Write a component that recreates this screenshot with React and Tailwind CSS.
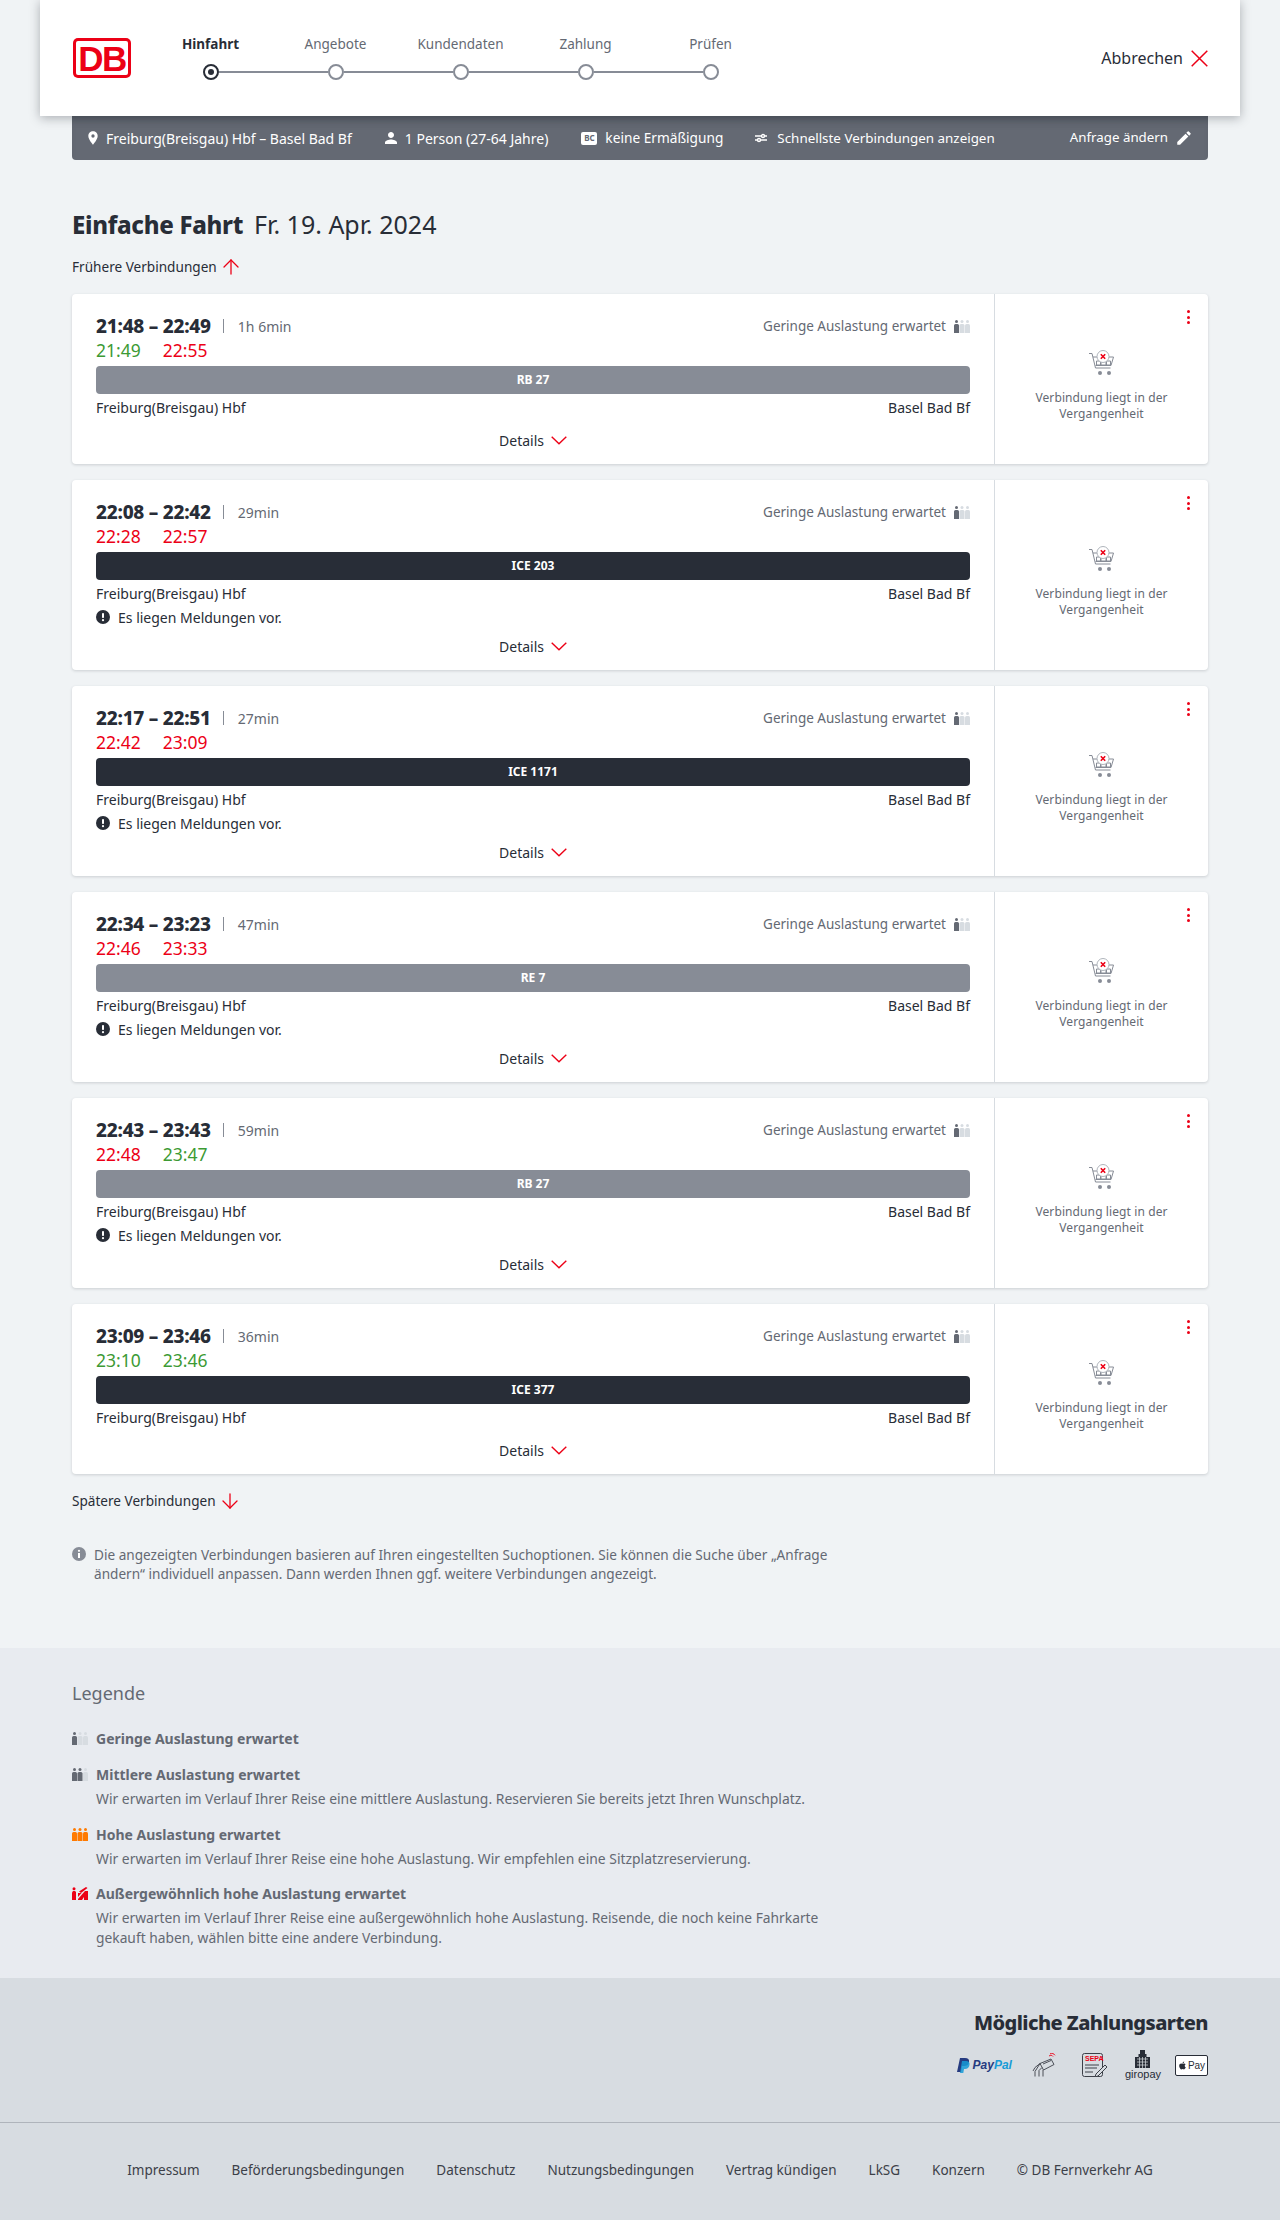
import React from "react";
import { ArrowDown, ArrowUp } from "lucide-react";
import { FaApple } from "react-icons/fa";
import { MdEdit, MdPlace, MdPerson } from "react-icons/md";

const connections = [
  { time: "21:48 – 22:49", dur: "1h 6min", dep: "21:49", depOk: true, arr: "22:55", arrOk: false, train: "RB 27", dark: false, notice: false },
  { time: "22:08 – 22:42", dur: "29min", dep: "22:28", depOk: false, arr: "22:57", arrOk: false, train: "ICE 203", dark: true, notice: true },
  { time: "22:17 – 22:51", dur: "27min", dep: "22:42", depOk: false, arr: "23:09", arrOk: false, train: "ICE 1171", dark: true, notice: true },
  { time: "22:34 – 23:23", dur: "47min", dep: "22:46", depOk: false, arr: "23:33", arrOk: false, train: "RE 7", dark: false, notice: true },
  { time: "22:43 – 23:43", dur: "59min", dep: "22:48", depOk: false, arr: "23:47", arrOk: true, train: "RB 27", dark: false, notice: true },
  { time: "23:09 – 23:46", dur: "36min", dep: "23:10", depOk: true, arr: "23:46", arrOk: true, train: "ICE 377", dark: true, notice: false },
];

const steps = ["Hinfahrt", "Angebote", "Kundendaten", "Zahlung", "Prüfen"];

const footerLinks = [
  "Impressum",
  "Beförderungsbedingungen",
  "Datenschutz",
  "Nutzungsbedingungen",
  "Vertrag kündigen",
  "LkSG",
  "Konzern",
  "© DB Fernverkehr AG",
];

const LoadIcon = ({ on = "#646973", off = "#d7dce1", count = 1, className = "" }) => (
  <svg width="16" height="13" viewBox="0 0 16 13" className={className}>
    {[0, 5.5, 11].map((x, i) => (
      <g key={x} fill={i < count ? on : off}>
        <circle cx={x + 2.5} cy="1.500" r="1.500" />
        <path d={`M${x} 5.500a1.500 1.500 0 0 1 1.500-1.500h2a1.500 1.500 0 0 1 1.500 1.500V13H${x}z`} />
      </g>
    ))}
  </svg>
);

const HighLoadIcon = () => (
  <svg width="16" height="13" viewBox="0 0 16 13">
    <g fill="#ec0016">
      <circle cx="2" cy="1.800" r="1.500" />
      <path d="M0 5.500L1 4h2l1 1v8H0z" />
      <path d="M6 6h3.500l-3.500 4zM6 13v-1l7-8h3v9h-4v-3l-2 3z" />
      <path d="M7 4.500L14 0l1.500 1L9 6z" />
    </g>
  </svg>
);

const CartIcon = () => (
  <svg width="27" height="27" viewBox="0 0 27 27" fill="none">
    <g stroke="#878c96" strokeWidth="1">
      <path d="M1 3.500h3l3.500 14.500h15" />
      <path d="M5 7h20.500l-2.500 8.500H7.500" />
      <path d="M8.500 11h4v4h-4zM13 10h5v5h-5zM18.500 11h4v4h-4z" />
    </g>
    <circle cx="15" cy="6.500" r="6" fill="#fff" stroke="#afb4bb" strokeWidth="1" />
    <path d="M12.800 4.300l4.400 4.400M17.200 4.300l-4.400 4.400" stroke="#ec0016" strokeWidth="1.600" />
    <circle cx="12" cy="23" r="2" fill="#878c96" />
    <circle cx="21" cy="23" r="2" fill="#878c96" />
  </svg>
);

const WideChevron = () => (
  <svg width="16" height="9" viewBox="0 0 16 9" fill="none">
    <path d="M0.700 0.700L8 7.700L15.300 0.700" stroke="#ec0016" strokeWidth="1.400" />
  </svg>
);

const NoticeIcon = () => (
  <svg width="14" height="14" viewBox="0 0 14 14">
    <circle cx="7" cy="7" r="7" fill="#282d37" />
    <rect x="6" y="3" width="2" height="5" rx="0.800" fill="#fff" />
    <circle cx="7" cy="10.200" r="1.100" fill="#fff" />
  </svg>
);

const Card = ({ c }) => (
  <div className="flex bg-white rounded-[4px] shadow-[0_1px_3px_rgba(40,45,55,0.18)]">
    <div className="flex-1 px-6 pb-1 pt-5">
      <div className="flex items-center justify-between h-6">
        <div className="flex items-center">
          <span className="text-[19px] font-extrabold tracking-[-0.25px] text-[#282d37]">{c.time}</span>
          <span className="ml-3 h-[14px] w-px bg-[#878c96]" />
          <span className="ml-[14px] text-[14px] text-[#646973]">{c.dur}</span>
        </div>
        <div className="flex items-center gap-2 text-[13.5px] text-[#646973]">
          Geringe Auslastung erwartet
          <LoadIcon />
        </div>
      </div>
      <div className="flex h-6 items-center gap-[22px] text-[17.5px]">
        <span className={c.depOk ? "text-[#3c9a34]" : "text-[#ec0016]"}>{c.dep}</span>
        <span className={c.arrOk ? "text-[#3c9a34]" : "text-[#ec0016]"}>{c.arr}</span>
      </div>
      <div
        className={`mt-1 flex h-7 items-center justify-center rounded-[4px] text-[12px] font-bold text-white ${
          c.dark ? "bg-[#282d37]" : "bg-[#878c96]"
        }`}
      >
        {c.train}
      </div>
      <div className="flex h-7 items-center justify-between pb-[2px] text-[14px] text-[#282d37]">
        <span>Freiburg(Breisgau) Hbf</span>
        <span>Basel Bad Bf</span>
      </div>
      {c.notice && (
        <div className="flex h-5 items-center gap-2 pb-[2px] text-[14px] text-[#282d37]">
          <NoticeIcon />
          Es liegen Meldungen vor.
        </div>
      )}
      <div className="flex h-[38px] items-center justify-center gap-[7px] pb-[2px] text-[14px] text-[#282d37]">
        Details
        <WideChevron />
      </div>
    </div>
    <div className="flex w-[214px] flex-col border-l border-[#d7dce1] pt-4">
      <div className="flex justify-end pr-[18px]">
        <div className="flex h-[14px] flex-col justify-between">
          <span className="size-[3px] rounded-full bg-[#ec0016]" />
          <span className="size-[3px] rounded-full bg-[#ec0016]" />
          <span className="size-[3px] rounded-full bg-[#ec0016]" />
        </div>
      </div>
      <div className="flex flex-1 flex-col items-center justify-center pb-4">
        <CartIcon />
        <p className="mt-[13px] text-center text-[12px] leading-4 text-[#646973] tracking-[0.1px]">
          Verbindung liegt in der
          <br />
          Vergangenheit
        </p>
      </div>
    </div>
  </div>
);

const Payments = () => (
  <div className="mt-3 flex items-center justify-end gap-[23px]">
    <div className="flex items-center gap-[3px]">
      <svg width="13" height="15" viewBox="0 0 13 15">
        <path d="M3 0h5c3 0 4.500 1.500 4 4-.5 3-2.500 4-5 4H5L4 14H0z" fill="#253b80" />
        <path d="M5 3h4c2.500 0 4 1.500 3.500 4-.5 2.500-2 4-4.500 4H7l-.7 4H3z" fill="#179bd7" opacity="0.85" />
      </svg>
      <span className="font-['Liberation_Sans'] text-[12px] font-bold italic leading-none">
        <span className="text-[#253b80]">Pay</span>
        <span className="text-[#179bd7]">Pal</span>
      </span>
    </div>
    <svg width="24" height="24" viewBox="0 0 24 24" fill="none" stroke="#3c4048" strokeWidth="0.900" className="-ml-[3px] mr-[5px]">
      <path d="M8 10.500l11-4.500 3 5.500-10.500 5.500z" />
      <path d="M11 11l8-3.500" />
      <path d="M8 10.500L3 14.500 1 18M3 23.500v-5l5-8M7 23.500v-6l3-3M11 23.500v-6.500" />
      <path d="M17 3c1.500-1 3-1 4 .5M18 .800c2-.8 4-.3 5 1.500" stroke="#ec0016" />
    </svg>
    <svg width="26" height="24" viewBox="0 0 26 24" fill="none" stroke="#3c4048" className="-ml-[2px] mr-[1px]">
      <rect x="0.500" y="0.500" width="20" height="23" rx="2" />
      <text x="3" y="8" fontSize="7" fontWeight="700" fill="#ec0016" stroke="none" fontFamily="Liberation Sans">SEPA</text>
      <path d="M3 12h14M3 15h12M3 19h8" strokeWidth="1" />
      <path d="M14 21l9-9 2 2-9 9-3 1z" fill="#d7dce1" strokeWidth="1" />
    </svg>
    <div className="-ml-[7px] flex flex-col items-center">
      <svg width="15" height="18" viewBox="0 0 15 18">
        <path d="M5 0h5v4h1.500v3H15v11H0V7h3.500V4H5z" fill="#282d37" />
        <path d="M2 9h11M2 12h11M2 15h11M4.500 7v11M7.500 7v11M10.500 7v11" stroke="#d7dce1" strokeWidth="0.700" />
      </svg>
      <span className="font-['Liberation_Sans'] text-[11px] leading-[12px] text-[#282d37]">giropay</span>
    </div>
    <div className="-ml-[9px] flex h-[21px] w-[33px] items-center justify-center gap-px rounded-[2px] border border-[#282d37] bg-white font-['Liberation_Sans'] text-[10px] text-[#282d37]">
      <FaApple size={9} />
      Pay
    </div>
  </div>
);

export default function App() {
  return (
    <div className="min-h-[2220px] bg-[#f0f3f5] font-['Noto_Sans',sans-serif] text-[#282d37]">
      <header className="relative z-10 mx-10 flex h-[116px] items-center bg-white pl-[33px] pr-8 shadow-[0_2px_10px_rgba(40,45,55,0.35)]">
        <div className="flex h-10 w-[58px] items-center justify-center rounded-[5px] bg-[#ec0016] p-[3px]">
          <div className="flex h-full w-full items-center justify-center rounded-[2px] bg-white font-['Liberation_Sans'] text-[35px] font-bold leading-none tracking-[-1.5px] text-[#ec0016]">
            DB
          </div>
        </div>
        <div className="ml-[17px] flex">
          {steps.map((step, i) => (
            <div key={step} className="flex w-[125px] flex-col items-center">
              <span className={`-mt-[2px] h-[22px] text-[13.5px] ${i === 0 ? "font-bold text-[#282d37]" : "text-[#646973]"}`}>
                {step}
              </span>
              <div className="mt-2 flex h-4 w-full items-center">
                <span className={`h-[2px] flex-1 ${i > 0 ? "bg-[#878c96]" : ""}`} />
                <span
                  className={`flex size-4 items-center justify-center rounded-full border-2 bg-white ${
                    i === 0 ? "border-[#282d37]" : "border-[#878c96]"
                  }`}
                >
                  {i === 0 && <span className="size-[6px] rounded-full bg-[#282d37]" />}
                </span>
                <span className={`h-[2px] flex-1 ${i < 4 ? "bg-[#878c96]" : ""}`} />
              </div>
            </div>
          ))}
        </div>
        <div className="ml-auto flex items-center gap-2 text-[16px]">
          Abbrechen
          <svg width="17" height="17" viewBox="0 0 17 17" fill="none">
            <path d="M0.700 0.700L16.300 16.300M16.300 0.700L0.700 16.300" stroke="#ec0016" strokeWidth="1.500" />
          </svg>
        </div>
      </header>

      <main className="mx-[72px]">
        <div className="flex h-11 items-center rounded-b-[4px] bg-[#646973] pl-4 pr-[15px] text-[14px] text-white shadow-[inset_0_8px_8px_-6px_rgba(40,45,55,0.35)]">
          <MdPlace size={16} className="-ml-[3px] mr-[5px]" />
          <span>Freiburg(Breisgau) Hbf – Basel Bad Bf</span>
          <MdPerson size={18} className="ml-[30px] mr-[5px]" />
          <span>1 Person (27-64 Jahre)</span>
          <span className="ml-[33px] mr-2 flex h-[13px] w-4 items-center justify-center rounded-[2px] bg-white text-[8px] font-bold leading-none text-[#646973]">
            BC
          </span>
          <span className="text-[13.7px]">keine Ermäßigung</span>
          <svg width="12" height="10" viewBox="0 0 12 10" fill="none" stroke="#fff" strokeWidth="1.400" className="ml-8 mr-[10px]">
            <path d="M0 3h12M0 7h12" />
            <circle cx="8" cy="3" r="1.500" fill="#646973" />
            <circle cx="4" cy="7" r="1.500" fill="#646973" />
          </svg>
          <span className="text-[13.4px]">Schnellste Verbindungen anzeigen</span>
          <span className="ml-auto text-[13.3px]">Anfrage ändern</span>
          <MdEdit size={18} className="ml-[7px]" />
        </div>

        <h1 className="mt-[49px] flex h-8 items-center">
          <span className="text-[24px] font-extrabold tracking-[-0.3px]">Einfache Fahrt</span>
          <span className="ml-[11px] text-[25px]">Fr. 19. Apr. 2024</span>
        </h1>

        <div className="mt-[14px] flex h-6 items-center gap-[2px] text-[13.6px]">
          Frühere Verbindungen
          <ArrowUp size={24} color="#ec0016" strokeWidth={1.3} />
        </div>

        <div className="mt-[15px] flex flex-col gap-4">
          {connections.map((c) => (
            <Card key={c.time} c={c} />
          ))}
        </div>

        <div className="mt-[15px] flex h-6 items-center gap-[2px] text-[13.6px]">
          Spätere Verbindungen
          <ArrowDown size={24} color="#ec0016" strokeWidth={1.3} />
        </div>

        <div className="mt-8 flex h-[73px] gap-2 text-[13.6px] leading-[19px] text-[#646973]">
          <svg width="14" height="14" viewBox="0 0 14 14" className="mt-[2px] shrink-0">
            <circle cx="7" cy="7" r="7" fill="#878c96" />
            <circle cx="7" cy="3.800" r="1.100" fill="#fff" />
            <rect x="6" y="6" width="2" height="5" fill="#fff" />
          </svg>
          <p className="w-[760px]">
            Die angezeigten Verbindungen basieren auf Ihren eingestellten Suchoptionen. Sie können die Suche über
            „Anfrage ändern“ individuell anpassen. Dann werden Ihnen ggf. weitere Verbindungen angezeigt.
          </p>
        </div>
      </main>

      <section className="mt-[30px] h-[330px] bg-[#e8ebf0] px-[72px] pt-[33px] text-[#646973]">
        <h2 className="h-6 text-[18px] leading-6">Legende</h2>
        <div className="mt-[23px] flex h-5 items-center gap-2 text-[14px] font-bold">
          <LoadIcon />
          Geringe Auslastung erwartet
        </div>
        <div className="mt-4 flex h-5 items-center gap-2 text-[14px] font-bold">
          <LoadIcon count={2} />
          Mittlere Auslastung erwartet
        </div>
        <p className="mt-[5px] pl-6 text-[13.9px] leading-5">
          Wir erwarten im Verlauf Ihrer Reise eine mittlere Auslastung. Reservieren Sie bereits jetzt Ihren Wunschplatz.
        </p>
        <div className="mt-[15px] flex h-5 items-center gap-2 text-[14px] font-bold">
          <LoadIcon count={3} on="#ff7a00" off="#ff7a00" />
          Hohe Auslastung erwartet
        </div>
        <p className="mt-[5px] pl-6 text-[13.9px] leading-5">
          Wir erwarten im Verlauf Ihrer Reise eine hohe Auslastung. Wir empfehlen eine Sitzplatzreservierung.
        </p>
        <div className="mt-[14px] flex h-5 items-center gap-2 text-[14px] font-bold">
          <HighLoadIcon />
          Außergewöhnlich hohe Auslastung erwartet
        </div>
        <p className="mt-[5px] w-[790px] pl-6 text-[13.8px] leading-5">
          Wir erwarten im Verlauf Ihrer Reise eine außergewöhnlich hohe Auslastung. Reisende, die noch keine Fahrkarte
          gekauft haben, wählen bitte eine andere Verbindung.
        </p>
      </section>

      <section className="h-[145px] border-b border-[#afb4bb] bg-[#d7dce1] px-[72px] pt-[30px]">
        <h2 className="h-[30px] text-right text-[20px] font-extrabold leading-[30px] tracking-[-0.55px]">Mögliche Zahlungsarten</h2>
        <Payments />
      </section>

      <footer className="flex h-[97px] items-center justify-center gap-8 bg-[#d7dce1] pb-[2px] text-[13.5px] text-[#3c4048]">
        {footerLinks.map((link) => (
          <span key={link}>{link}</span>
        ))}
      </footer>
    </div>
  );
}
